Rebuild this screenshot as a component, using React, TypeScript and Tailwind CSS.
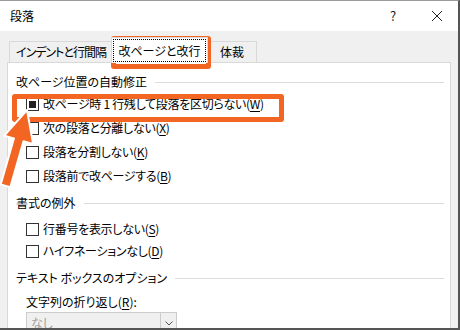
import React from 'react';

const font = "font-['Noto_Sans_CJK_JP','Noto_Sans',sans-serif] [font-feature-settings:'palt']";

function Check({ checked = false }: { checked?: boolean }) {
  return (
    <span className="flex h-[13px] w-[13px] shrink-0 items-center justify-center border border-[#333] bg-white">
      {checked && <span className="h-[7px] w-[7px] bg-[#222]" />}
    </span>
  );
}

function Row({ label, accel, checked, h }: { label: string; accel: string; checked?: boolean; h: string }) {
  return (
    <div className={`flex items-center gap-[4px] pl-[10px] ${h}`}>
      <Check checked={checked} />
      <span className="leading-[16px] tracking-[-0.3px]">
        {label}(<span className="underline underline-offset-2">{accel}</span>)
      </span>
    </div>
  );
}

function Group({ title, className }: { title: string; className: string }) {
  return (
    <div className={`flex h-[16px] items-center gap-[8px] ${className}`}>
      <span className="leading-[16px]">{title}</span>
      <span className="h-px flex-1 bg-[#dcdcdc]" />
    </div>
  );
}

export default function App() {
  return (
    <div className={`relative flex h-[330px] w-[460px] flex-col overflow-hidden border-t border-r-2 border-b-2 border-t-[#9a9a9a] border-r-[#555] border-b-[#555] bg-[#f0f0f0] text-[12px] text-black ${font}`}>
      {/* title bar */}
      <div className="flex h-[30px] shrink-0 items-center bg-white pl-[10px]">
        <span className="flex-1 leading-none">段落</span>
        <span className="w-[12px] text-[13px] text-[#222]">?</span>
        <svg className="ml-[29px] mr-[15px]" width="12" height="12" viewBox="0 0 12 12">
          <path d="M1 1 L11 11 M11 1 L1 11" stroke="#222" strokeWidth="1" />
        </svg>
      </div>

      <div className="flex min-h-0 flex-1 flex-col">
        {/* tabs */}
        <div className="flex items-end pl-[9px] pt-[6px]">
          <div className="flex h-[21px] w-[104px] items-center justify-center border border-b-0 border-[#d9d9d9] tracking-[-1px]">
            インデントと行間隔
          </div>
          <div className="relative z-10 -mb-px -ml-[2px] flex h-[26px] w-[97px] items-start justify-center border border-b-0 border-[#d9d9d9] bg-white pt-[1px]">
            <span className="border border-dotted border-black px-[4px] leading-[21px]">改ページと改行</span>
          </div>
          <div className="flex h-[21px] w-[49px] items-center justify-center border border-b-0 border-l-0 border-[#d9d9d9]">
            体裁
          </div>
        </div>

        {/* panel */}
        <div className="mx-[7px] flex min-h-0 flex-1 flex-col border border-b-0 border-[#d9d9d9] bg-white pl-[8px] pr-[6px] pt-[11px]">
          <Group title="改ページ位置の自動修正" className="" />
          <div className="mt-[2px]">
            <Row h="h-[24px]" checked label="改ページ時 1 行残して段落を区切らない" accel="W" />
            <Row h="h-[24px]" label="次の段落と分離しない" accel="X" />
            <Row h="h-[24px]" label="段落を分割しない" accel="K" />
            <Row h="h-[24px]" label="段落前で改ページする" accel="B" />
          </div>
          <Group title="書式の例外" className="mt-[7px]" />
          <div className="mt-[7px]">
            <Row h="h-[22px]" label="行番号を表示しない" accel="S" />
            <Row h="h-[22px]" label="ハイフネーションなし" accel="D" />
          </div>
          <Group title="テキスト ボックスのオプション" className="mt-[8px]" />
          <div className="mt-[8px] pl-[10px] leading-[16px]">
            文字列の折り返し(<span className="underline underline-offset-2">R</span>):
          </div>
          <div className="ml-[10px] mt-[2px] flex h-[22px] w-[151px] shrink-0 border border-[#cccccc] bg-[#f0f0f0]">
            <span className="flex-1 pl-[4px] leading-[20px] text-[#a0a0a0]">なし</span>
            <span className="flex w-[16px] items-center justify-center border-l border-[#cccccc]">
              <svg width="8" height="5" viewBox="0 0 8 5">
                <path d="M0.5 0.5 L4 4 L7.5 0.5" fill="none" stroke="#555" strokeWidth="1" />
              </svg>
            </span>
          </div>
        </div>
      </div>

      {/* annotations */}
      <div className="absolute left-[111px] top-[35px] h-[33px] w-[100px] rounded-[3px] border-[5px] border-[#f26522]" />
      <div className="absolute left-[12px] top-[93px] h-[28px] w-[272px] rounded-[3px] border-[5px] border-[#f26522]" />
      <svg className="absolute left-0 top-0" width="60" height="200" viewBox="0 0 60 200">
        <polygon
          points="27,109 33.1,142.9 23.5,140.2 10.3,186.2 0.7,183.4 13.9,137.4 4.3,134.7"
          fill="#f26522"
          stroke="white"
          strokeWidth="2"
          strokeLinejoin="round"
        />
      </svg>
    </div>
  );
}
